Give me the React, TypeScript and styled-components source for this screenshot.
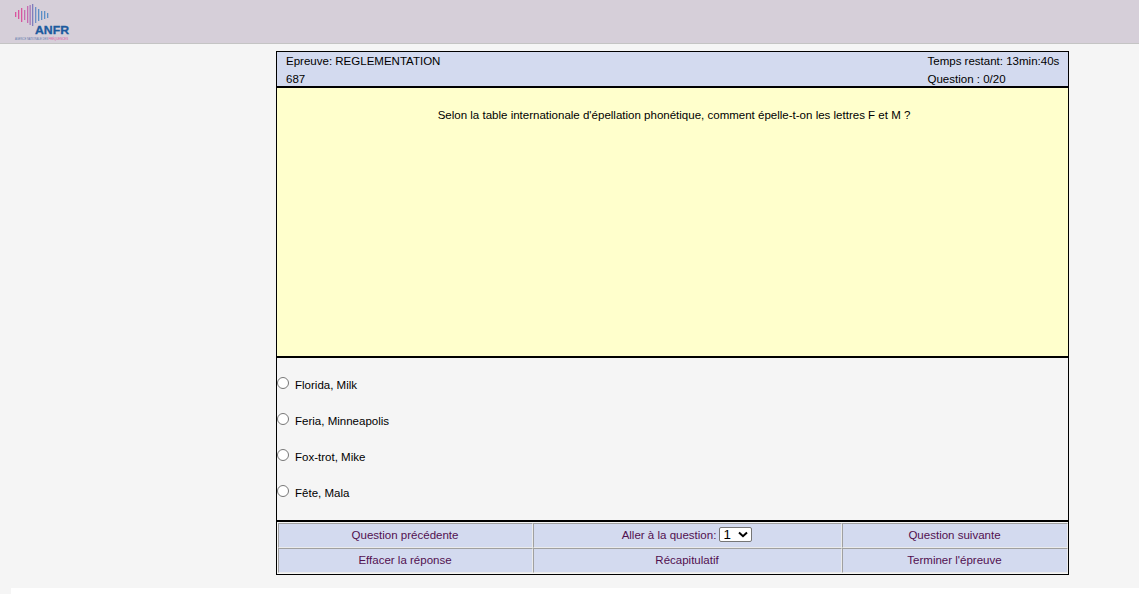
import React from "react";
import styled, { createGlobalStyle } from "styled-components";

const Global = createGlobalStyle`
  html, body { margin: 0; padding: 0; background: #f5f5f5; }
  body { font-family: "Liberation Sans", Arial, sans-serif; font-size: 11.52px; color: #000; overflow: hidden; }
`;
const Page = styled.div`height: 594px; display: flex; flex-direction: column;`;
const TopBar = styled.header`
  height: 40px; flex: none; background: #d6cfd9; border-bottom: 1px solid #c4c4c4;
  padding: 3px 0 0 14px;
`;
const Main = styled.main`flex: none; padding: 7px 70px 0 276px;`;
const Exam = styled.div`width: 793px; height: 524px; box-sizing: border-box; border: 1px solid #000; display: flex; flex-direction: column;`;
const Info = styled.div`
  height: 34px; flex: none; background: #d3daef; display: flex; justify-content: space-between;
  padding: 0 8.5px 0 9px; line-height: 18px;
`;
const InfoRight = styled.div`width: 132px;`;
const Question = styled.div`
  height: 272px; flex: none; box-sizing: border-box; background: #ffffcc; border-top: 2px solid #000; border-bottom: 2px solid #000;
  text-align: center; padding: 19px 0 0 3px; line-height: 16px;
`;
const Answers = styled.div`height: 162px; flex: none; padding-top: 18px; box-sizing: border-box;`;
const Answer = styled.label`height: 36px; display: flex; align-items: flex-start;`;
const Radio = styled.input`width: 12px; height: 12px; margin: 1px 6px 0 0; flex: none;`;
const AnswerText = styled.span`line-height: 16px; margin-top: 1px;`;
const Nav = styled.div`
  flex: 1; border-top: 2px solid #000; display: grid; grid-template-columns: 255px 309px 226px;
  grid-template-rows: 25px 25px; padding: 1px 0 0 1px;
`;
const Cell = styled.div`
  background: #d3daef; border: 1px solid; border-color: #a0a0a0 #ebebeb #ebebeb #a0a0a0; box-sizing: border-box;
  display: flex; align-items: center; justify-content: center; color: #52104f; padding: 0 1px 2px 0;
`;
const SelectWrap = styled.span`position: relative; display: inline-flex; width: 33px; height: 15px; margin-left: 3px;`;
const Select = styled.select`
  appearance: none; font-family: "Liberation Sans", Arial, sans-serif; font-size: 13.33px; line-height: 13px;
  width: 33px; height: 15px; padding: 0 0 0 3px; box-sizing: border-box; background: #fff; color: #000;
  border: 1px solid #767676; border-radius: 2px;
`;
const Chevron = styled.svg`position: absolute; right: 4px; top: 4px; width: 10px; height: 7px; pointer-events: none;`;
const Footer = styled.div`margin: 13px 0 0 11px; flex: 1; background: #fff;`;

type Bar = { x: number; top: number; h: number; c: string };
const bars: Bar[] = [
  { x: 15, top: 12, h: 5, c: "#d9559f" },
  { x: 18, top: 10, h: 9, c: "#d9559f" },
  { x: 21, top: 8, h: 14, c: "#d9559f" },
  { x: 24, top: 10, h: 10, c: "#c86bb0" },
  { x: 27, top: 6, h: 17, c: "#c86bb0" },
  { x: 29.5, top: 5, h: 20, c: "#a679b8" },
  { x: 32, top: 4, h: 22, c: "#7f7fbc" },
  { x: 35, top: 7, h: 16, c: "#6f8fc6" },
  { x: 38, top: 9, h: 12, c: "#5b8fc6" },
  { x: 41, top: 11, h: 9, c: "#5b8fc6" },
  { x: 44, top: 11, h: 8, c: "#5b8fc6" },
  { x: 47, top: 13, h: 5, c: "#5b8fc6" },
];

function Logo() {
  return (
    <svg width="58" height="38" viewBox="14 3 58 38" role="img" aria-label="ANFR">
      {bars.map((b) => <rect key={b.x} x={b.x} y={b.top} width="1.3" height={b.h} fill={b.c} />)}
      <text x="35" y="33.5" fontFamily="Liberation Sans" fontWeight="700" fontSize="11.5" textLength="34" lengthAdjust="spacingAndGlyphs" fill="#1c5a9e" stroke="#1c5a9e" strokeWidth="0.3">ANFR</text>
      <text x="15" y="40.2" fontFamily="Liberation Sans" fontSize="2.6" textLength="33" lengthAdjust="spacingAndGlyphs" fill="#5f78ac">AGENCE NATIONALE DES</text>
      <text x="48.5" y="40.2" fontFamily="Liberation Sans" fontSize="2.6" textLength="19.5" lengthAdjust="spacingAndGlyphs" fill="#d9559f">FRÉQUENCES</text>
    </svg>
  );
}

export default function App() {
  const answers = ["Florida, Milk", "Feria, Minneapolis", "Fox-trot, Mike", "Fête, Mala"];
  return (
    <Page>
      <Global />
      <TopBar><Logo /></TopBar>
      <Main>
        <Exam>
          <Info>
            <div>Epreuve: REGLEMENTATION<br />687</div>
            <InfoRight>Temps restant: 13min:40s<br />Question : 0/20</InfoRight>
          </Info>
          <Question>Selon la table internationale d'épellation phonétique, comment épelle-t-on les lettres F et M ?</Question>
          <Answers>
            {answers.map((a) => (
              <Answer key={a}><Radio type="radio" name="a" /><AnswerText>{a}</AnswerText></Answer>
            ))}
          </Answers>
          <Nav>
            <Cell>Question précédente</Cell>
            <Cell>
              Aller à la question:
              <SelectWrap>
                <Select defaultValue="1"><option>1</option></Select>
                <Chevron viewBox="0 0 10 7"><path d="M1 1.5 L5 5.2 L9 1.5" fill="none" stroke="#000" strokeWidth="2" /></Chevron>
              </SelectWrap>
            </Cell>
            <Cell>Question suivante</Cell>
            <Cell>Effacer la réponse</Cell>
            <Cell>Récapitulatif</Cell>
            <Cell>Terminer l'épreuve</Cell>
          </Nav>
        </Exam>
      </Main>
      <Footer />
    </Page>
  );
}
